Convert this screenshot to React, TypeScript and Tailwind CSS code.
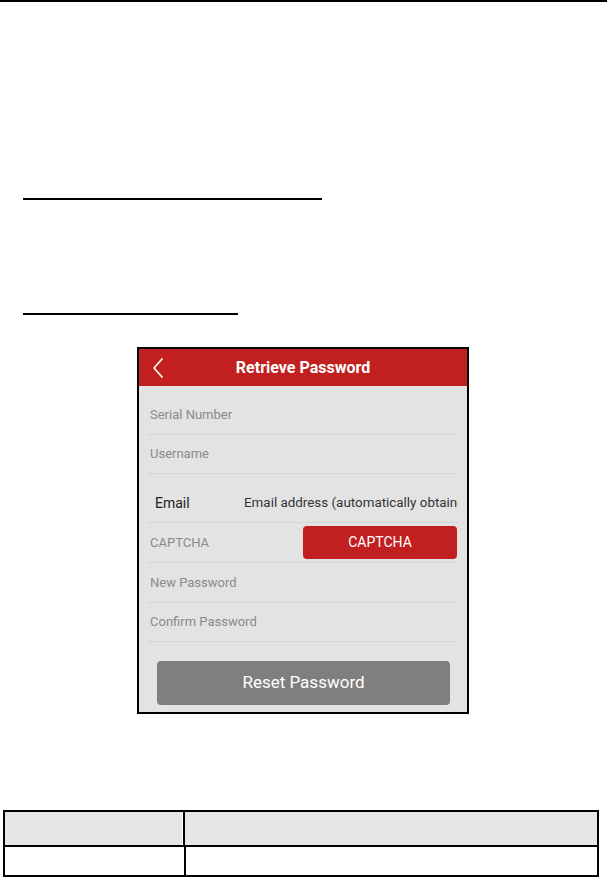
import React from "react";

const font = { fontFamily: "Roboto, 'Liberation Sans', sans-serif" };

export default function App() {
  return (
    <div className="w-[607px] h-[878px] bg-white overflow-hidden" style={font}>
      <div className="h-[2px] w-full bg-black" />
      <div className="ml-[23px] mt-[196px] w-[299px] h-[2px] bg-black" />
      <div className="ml-[23px] mt-[113px] w-[215px] h-[2px] bg-black" />

      <div className="ml-[137px] mt-[32px] w-[332px] h-[367px] border-2 border-black flex flex-col">
        <div className="relative h-[37px] bg-[#c21f20] flex items-center justify-center">
          <svg
            className="absolute left-[12px] top-[8px]"
            width="14"
            height="22"
            viewBox="0 0 14 22"
            fill="none"
          >
            <path d="M11 2 L3 11 L11 20" stroke="white" strokeWidth="1.7" strokeLinecap="round" strokeLinejoin="round" />
          </svg>
          <span className="text-white font-bold text-[16px] leading-none">Retrieve Password</span>
        </div>
        <div className="flex-1 bg-[#e3e3e3] px-[9px] pt-[9px] pb-[7px] flex flex-col">
          <div className="flex items-center border-b border-[#d4d4d4] h-[40px] pl-[2px] text-[13px] text-[#8a8a8a]">Serial Number</div>
          <div className="flex items-center border-b border-[#d4d4d4] h-[39px] pl-[2px] text-[13px] text-[#8a8a8a]">Username</div>
          <div className="flex items-center border-b border-[#d4d4d4] h-[49px] pt-[10px]">
            <span className="w-[96px] shrink-0 pl-[7px] text-[14px] text-[#222]">Email</span>
            <span className="flex-1 overflow-hidden whitespace-nowrap text-[13.4px] text-[#333]">
              Email address (automatically obtained)
            </span>
          </div>
          <div className="flex items-center border-b border-[#d4d4d4] h-[40px] pl-[2px]">
            <span className="text-[13px] text-[#8a8a8a]">CAPTCHA</span>
            <div className="ml-auto mr-[1px] w-[154px] h-[33px] rounded-[4px] bg-[#c21f20] flex items-center justify-center text-white text-[14px]">
              CAPTCHA
            </div>
          </div>
          <div className="flex items-center border-b border-[#d4d4d4] h-[40px] pl-[2px] text-[13px] text-[#8a8a8a]">New Password</div>
          <div className="flex items-center border-b border-[#d4d4d4] h-[39px] pl-[2px] text-[13px] text-[#8a8a8a]">Confirm Password</div>
          <div className="mt-[19px] ml-[9px] w-[293px] h-[44px] rounded-[4px] bg-[#7f7f7f] flex items-center justify-center text-white text-[17px]">
            Reset Password
          </div>
        </div>
      </div>

      <div className="ml-[3px] mt-[96px] w-[596px] border-2 border-black">
        <div className="flex h-[35px] bg-[#e6e6e6] border-b-2 border-black">
          <div className="w-[178px] shrink-0 border-r border-white" />
          <div className="w-[2px] bg-black" />
          <div className="flex-1" />
        </div>
        <div className="flex h-[28px] bg-white">
          <div className="w-[179px] shrink-0" />
          <div className="w-[2px] bg-black" />
          <div className="flex-1" />
        </div>
      </div>
    </div>
  );
}
